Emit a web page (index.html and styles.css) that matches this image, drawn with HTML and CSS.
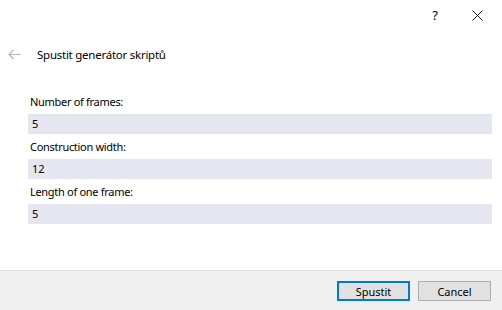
FILE: index.html
```html
<!DOCTYPE html>
<html>
<head>
<meta charset="utf-8">
<link rel="stylesheet" href="styles.css">
</head>
<body>
<div class="dialog">
  <div class="titlebar">
    <span class="help">?</span>
    <span class="close">
      <svg width="11" height="11" viewBox="0 0 11 11"><path d="M0.5 0.5 L10.5 10.5 M10.5 0.5 L0.5 10.5" stroke="#1a1a1a" stroke-width="1" fill="none"/></svg>
    </span>
  </div>
  <div class="header">
    <span class="back">
      <svg width="13" height="11" viewBox="0 0 13 11"><path d="M12.5 5.5 H1 M5.5 1 L1 5.5 L5.5 10" stroke="#b4b4b4" stroke-width="1.2" fill="none"/></svg>
    </span>
    <span class="title">Spustit generátor skriptů</span>
  </div>
  <div class="form">
    <div class="field">
      <div class="label">Number of frames:</div>
      <div class="input">5</div>
    </div>
    <div class="field">
      <div class="label">Construction width:</div>
      <div class="input">12</div>
    </div>
    <div class="field">
      <div class="label">Length of one frame:</div>
      <div class="input">5</div>
    </div>
  </div>
  <div class="footer">
    <button class="btn primary">Spustit</button>
    <button class="btn">Cancel</button>
  </div>
</div>
</body>
</html>
```

FILE: styles.css
```css
html, body {
  margin: 0;
  padding: 0;
  background: #ffffff;
}
body {
  font-family: "Noto Sans", "Open Sans", sans-serif;
  font-size: 11px;
  color: #000;
}
.dialog {
  width: 502px;
  height: 310px;
  display: flex;
  flex-direction: column;
}
.titlebar {
  height: 30px;
  display: flex;
  align-items: center;
  justify-content: flex-end;
}
.help {
  font-size: 13px;
  width: 12px;
  text-align: center;
  margin-right: 31px;
  margin-top: -1px;
}
.close {
  display: flex;
  margin-right: 19px;
}
.header {
  height: 48px;
  display: flex;
  align-items: center;
}
.back {
  display: flex;
  margin-left: 8px;
  width: 29px;
}
.title {
  font-size: 11.5px;
  letter-spacing: -0.25px;
}
.form {
  margin-top: 11px;
  padding: 0 10px 0 28px;
  display: flex;
  flex-direction: column;
}
.field {
  display: flex;
  flex-direction: column;
}
.label {
  height: 25px;
  line-height: 25px;
  padding-left: 2px;
  letter-spacing: -0.3px;
}
.input {
  height: 20px;
  line-height: 20px;
  background: #e6e6f0;
  padding-left: 4px;
}
.footer {
  margin-top: auto;
  height: 39px;
  border-top: 1px solid #dfdfdf;
  background: #f0f0f0;
  display: flex;
  justify-content: flex-end;
  align-items: flex-start;
  padding-right: 11px;
  gap: 8px;
}
.btn {
  margin-top: 10px;
  width: 73px;
  height: 20px;
  background: #e1e1e1;
  border: 1px solid #adadad;
  font-family: inherit;
  font-size: 11px;
  padding: 0;
  color: #000;
}
.btn.primary {
  border: 2px solid #0078d7;
}
```
